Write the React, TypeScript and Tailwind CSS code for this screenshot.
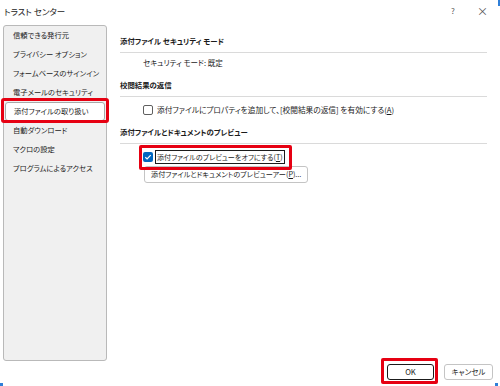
import React from "react";

const navItems = [
  "信頼できる発行元",
  "プライバシー オプション",
  "フォームベースのサインイン",
  "電子メールのセキュリティ",
  "添付ファイルの取り扱い",
  "自動ダウンロード",
  "マクロの設定",
  "プログラムによるアクセス",
];

const Checkbox = ({ checked }: { checked?: boolean }) =>
  checked ? (
    <span className="flex h-[10px] w-[10px] shrink-0 items-center justify-center rounded-[2px] bg-[#0067c0]">
      <svg width="8" height="8" viewBox="0 0 8 8">
        <path d="M1.3 4.2 L3.1 5.9 L6.7 2.1" fill="none" stroke="#fff" strokeWidth="1.2" />
      </svg>
    </span>
  ) : (
    <span className="h-[10px] w-[10px] shrink-0 rounded-[2px] border border-[#5f5f5f] bg-white" />
  );

const SectionTitle = ({ children, first }: { children: React.ReactNode; first?: boolean }) => (
  <>
    <div className={`flex h-[14px] items-center whitespace-nowrap font-bold text-[7.4px] ${first ? "mt-[9px]" : "mt-[8px]"}`}>{children}</div>
    <div className="mt-[4px] h-px w-full bg-[#dadada]" />
  </>
);

const App = () => {
  return (
    <div className="relative flex h-[386px] w-[500px] flex-col overflow-hidden bg-white text-[#1b1b1b] [font-family:'Noto_Sans_CJK_JP',sans-serif] [font-feature-settings:'palt']">
      <div className="flex h-[25px] shrink-0 items-start pt-[4px]">
        <span className="pl-[4px] text-[8.5px] leading-[14px]">トラスト センター</span>
        <span className="ml-auto w-[10px] text-center text-[8px] leading-[14px] text-[#555]">?</span>
        <span className="ml-[19px] mr-[13px] w-[10px] text-center text-[11px] leading-[14px] text-[#555]">×</span>
      </div>

      <div className="flex h-[336px] shrink-0">
        <div className="ml-[3px] flex w-[104px] flex-col rounded-[3px] border border-[#b9b9b9] bg-[#f0f0f0]">
          {navItems.map((item, i) =>
            i === 4 ? (
              <div key={item} className="relative mx-px flex h-[19px] items-center whitespace-nowrap rounded-[3px] border border-[#a8a8a8] bg-white pl-[8px] text-[7.3px]">
                {item}
                <div className="absolute -left-[5px] -right-[5px] -top-[5px] -bottom-[3px] rounded-[3px] border-[3px] border-[#e60012]" />
              </div>
            ) : (
              <div key={item} className="flex h-[19px] items-center whitespace-nowrap pl-[9px] text-[7.3px]">
                {item}
              </div>
            )
          )}
        </div>

        <div className="ml-[13px] mr-[13px] flex flex-1 flex-col">
          <SectionTitle first>添付ファイル セキュリティ モード</SectionTitle>
          <div className="mt-[3px] flex h-[14px] items-center pl-[23px] text-[7.5px]">セキュリティ モード: 既定</div>

          <SectionTitle>校閲結果の返信</SectionTitle>
          <div className="mt-[6px] flex h-[14px] items-center gap-[4px] whitespace-nowrap pl-[23px] text-[7.7px]">
            <Checkbox />
            <span>
              添付ファイルにプロパティを追加して、[校閲結果の返信] を有効にする(<span className="underline">A</span>)
            </span>
          </div>

          <SectionTitle>添付ファイルとドキュメントのプレビュー</SectionTitle>
          <div className="relative mt-[6px] flex h-[14px] items-center gap-[2px] self-start whitespace-nowrap pl-[23px] text-[7.1px]">
            <Checkbox checked />
            <span className="border border-[#1b1b1b] px-px leading-[12px]">
              添付ファイルのプレビューをオフにする(<span className="underline">T</span>)
            </span>
            <div className="absolute -bottom-[6px] -right-[7px] -top-[5px] left-[19px] rounded-[2px] border-[3px] border-[#e60012]" />
          </div>
          <div className="ml-[24px] mt-[2px] flex h-[17px] items-center self-start whitespace-nowrap rounded-[3px] border border-[#c4c4c4] bg-white px-[6px] text-[7.2px]">
            添付ファイルとドキュメントのプレビューアー(<span className="underline">P</span>)...
          </div>
        </div>
      </div>

      <div className="mt-[3px] flex justify-end gap-[10px] pr-[7px]">
        <div className="relative flex h-[16px] w-[47px] items-center justify-center rounded-[3px] border-[1.5px] border-[#1b1b1b] bg-white text-[7.7px]">
          OK
          <div className="absolute -bottom-[5px] -left-[7px] -right-[5px] -top-[7px] rounded-[2px] border-[3px] border-[#e60012]" />
        </div>
        <div className="flex h-[16px] w-[49px] items-center justify-center rounded-[3px] border border-[#c4c4c4] bg-white text-[7.5px]">
          キャンセル
        </div>
      </div>

      <div className="absolute right-0 top-0 h-[6px] w-[2px] bg-[#2f7fd8]" />
      <div className="absolute bottom-0 left-0 h-[3px] w-[3px] bg-[#2f7fd8]" />
      <div className="absolute bottom-0 right-[2px] h-[3px] w-[3px] bg-[#2f7fd8]" />
    </div>
  );
};

export default App;
